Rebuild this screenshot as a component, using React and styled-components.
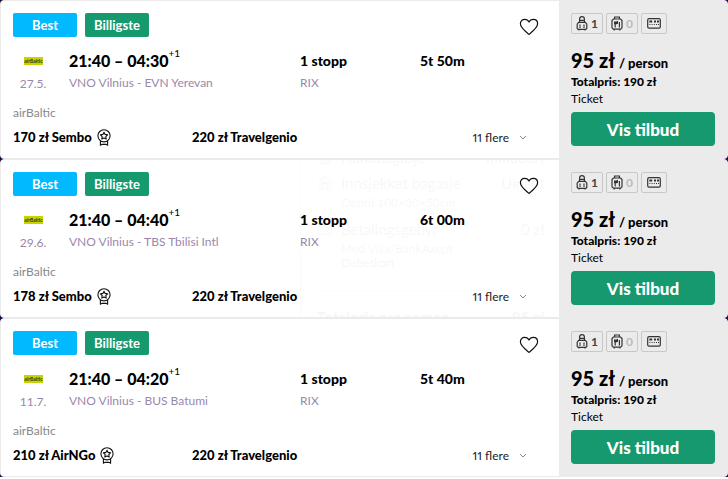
import React from 'react'
import styled, { createGlobalStyle } from 'styled-components'

const trips = [
  {
    id: 1,
    date: '27.5.',
    time: '21:40 – 04:30',
    route: 'VNO Vilnius - EVN Yerevan',
    duration: '5t 50m',
    offer: '170 zł Sembo',
  },
  {
    id: 2,
    date: '29.6.',
    time: '21:40 – 04:40',
    route: 'VNO Vilnius - TBS Tbilisi Intl',
    duration: '6t 00m',
    offer: '178 zł Sembo',
    fees: true,
  },
  {
    id: 3,
    date: '11.7.',
    time: '21:40 – 04:20',
    route: 'VNO Vilnius - BUS Batumi',
    duration: '5t 40m',
    offer: '210 zł AirNGo',
  },
]

const HeartIcon = () => (
  <svg width='20' height='18' viewBox='0 0 20 18' fill='none' stroke='#111' strokeWidth='1.2' strokeLinejoin='round'>
    <path d='M10 16.4C7 13.8 1.4 9.8 1.4 5.8C1.4 3.2 3.2 1.4 5.6 1.4C7.6 1.4 9.2 2.4 10 4C10.8 2.4 12.4 1.4 14.4 1.4C16.8 1.4 18.6 3.2 18.6 5.8C18.6 9.8 13 13.8 10 16.4Z' />
  </svg>
)

const AwardIcon = () => (
  <svg width='14' height='17' viewBox='0 0 14 17' fill='none' stroke='#111' strokeWidth='1.1' strokeLinejoin='round'>
    <circle cx='7' cy='6.8' r='6.1' />
    <path d='M7 3.2l1.1 2.2 2.5.4-1.8 1.7.4 2.5L7 8.9l-2.2 1.1.4-2.5-1.8-1.7 2.5-.4z' />
    <path d='M3.4 12v4.3l1.4-.9h4.4l1.4.9V12' />
  </svg>
)

const ChevronIcon = () => (
  <svg width='8' height='5' viewBox='0 0 8 5' fill='none' stroke='#888' strokeWidth='1'>
    <path d='M1 1l3 3 3-3' />
  </svg>
)

const BackpackIcon = () => (
  <svg width='12' height='15' viewBox='0 0 12 15' fill='none' stroke='#333' strokeWidth='1.2'>
    <path d='M3.6 6.4V3a2.4 2.4 0 0 1 4.8 0v3.4M3.6 4.4h4.8' />
    <path d='M2.6 6.4h6.8l1.4 1.8v4.2l-1 1H2.2l-1-1V8.2z' />
    <path d='M4 8.4v2M8 8.4v2M3.4 11.4h1.2M7.4 11.4h1.2M3 13.4v1.2M9 13.4v1.2' />
  </svg>
)

const SuitcaseIcon = () => (
  <svg width='12' height='15' viewBox='0 0 12 15' fill='none' stroke='#333' strokeWidth='1.2'>
    <path d='M3.6 3V1h4.8v2M3.2 13.2v1.3M8.8 13.2v1.3' />
    <path d='M2.4 3h7.2l1.4 1.6v7.2l-1.4 1.4H2.4L1 11.8V4.6z' />
    <path d='M4.2 8v3.6M6.4 5v3M8.4 6v5.6' />
    <path d='M3 5.6h3v2.6H3z' fill='#333' stroke='none' />
  </svg>
)

const CardIcon = () => (
  <svg width='14' height='11' viewBox='0 0 14 11' fill='none' stroke='#333' strokeWidth='1.2'>
    <rect x='.7' y='.7' width='12.6' height='9.4' rx='1.4' />
    <path d='M2.4 3.4h2.8M7 3.4h2M10 3.4h2' strokeWidth='2' />
    <path d='M2.4 6.5h1M4.6 6.5h1M6.8 6.5h1M9 6.5h1M11 6.5h1' />
  </svg>
)

const AirlineLogo = () => (
  <svg width='20' height='8' viewBox='0 0 20 8' role='img' aria-label='airBaltic'>
    <rect x='1' width='19' height='8' fill='#c8d400' />
    <text x='10.5' y='6' textAnchor='middle' fontSize='5' fontWeight='700' fontFamily='Lato, sans-serif' fill='#2b3a1c'>
      airBaltic
    </text>
  </svg>
)

const FeesPopup = () => (
  <Popup aria-hidden='true'>
    <Fee>
      <BackpackIcon />
      <FeeName>Håndbagasje</FeeName>
      <FeeName>Inkludert</FeeName>
    </Fee>
    <Fee>
      <SuitcaseIcon />
      <FeeName>Innsjekket bagasje</FeeName>
      <FeeName>Ukjent</FeeName>
      <FeeNote>Opptil 100×80×50cm</FeeNote>
    </Fee>
    <Fee>
      <CardIcon />
      <FeeName>Betalingsgebyr</FeeName>
      <FeeName>0 zł</FeeName>
      <FeeNote>
        Med Visa/BankAxept
        <br />
        Debetkort
      </FeeNote>
    </Fee>
    <FeeTotal>
      <span>Totalpris per person</span>
      <span>95 zł</span>
    </FeeTotal>
  </Popup>
)

const Trip = ({ trip }) => (
  <Card>
    <Details>
      <TopRow>
        <Badge $color='#00b9ff'>Best</Badge>
        <Badge $color='#17996f'>Billigste</Badge>
        <SaveButton type='button' aria-label='Lagre'>
          <HeartIcon />
        </SaveButton>
      </TopRow>
      <Flight>
        <Carrier>
          <AirlineLogo />
          <Muted>{trip.date}</Muted>
        </Carrier>
        <Leg>
          <Strong $big>
            {trip.time}
            <NextDay>+1</NextDay>
          </Strong>
          <Muted>{trip.route}</Muted>
        </Leg>
        <Leg>
          <Strong>1 stopp</Strong>
          <Muted>RIX</Muted>
        </Leg>
        <Leg>
          <Strong>{trip.duration}</Strong>
        </Leg>
      </Flight>
      <Airline>airBaltic</Airline>
      <Offers>
        <Offer>
          {trip.offer}
          <AwardIcon />
        </Offer>
        <Offer>220 zł Travelgenio</Offer>
        <MoreButton type='button'>
          11 flere
          <ChevronIcon />
        </MoreButton>
      </Offers>
    </Details>
    <Booking>
      <Extras>
        <Extra>
          <BackpackIcon />1
        </Extra>
        <Extra $none>
          <SuitcaseIcon />0
        </Extra>
        <Extra>
          <CardIcon />
        </Extra>
      </Extras>
      <Price>
        95 zł <small>/ person</small>
      </Price>
      <Total>Totalpris: 190 zł</Total>
      <Ticket>Ticket</Ticket>
      <DealButton type='button'>Vis tilbud</DealButton>
    </Booking>
    {trip.fees && <FeesPopup />}
  </Card>
)

const App = () => (
  <>
    <GlobalStyle />
    <Results>
      {trips.map((trip) => (
        <Trip key={trip.id} trip={trip} />
      ))}
    </Results>
  </>
)

export default App

const GlobalStyle = createGlobalStyle`
* {
  box-sizing: border-box;
}
body {
  margin: 0;
  background: #fff;
  color: #000;
  font-family: Lato, 'Noto Sans', sans-serif;
  font-size: 12px;
  line-height: 16px;
}
button {
  font-family: inherit;
  border: 0;
  padding: 0;
  cursor: pointer;
}
svg {
  flex: none;
  display: block;
}
`

const Results = styled.main`
  background: #200a3c;
`

const Card = styled.article`
  position: relative;
  display: grid;
  grid-template-columns: minmax(0, 1fr) 168px;
  background: #ebebeb;
  border: 1px solid #ebebeb;
  border-radius: 4px;
  overflow: hidden;
`

const Details = styled.div`
  display: flex;
  flex-direction: column;
  padding: 12px 12px 13px;
  background: #fff;
`

const TopRow = styled.div`
  display: flex;
  gap: 8px;
  margin-bottom: 16px;
`

const Badge = styled.span`
  width: 64px;
  height: 24px;
  border-radius: 2px;
  background: ${({ $color }) => $color};
  color: #fff;
  font-size: 13px;
  font-weight: 700;
  line-height: 25px;
  text-align: center;
`

const SaveButton = styled.button`
  display: flex;
  align-items: center;
  margin-left: auto;
  margin-right: 8px;
  padding-top: 4px;
  background: none;
`

const Flight = styled.div`
  display: grid;
  grid-template-columns: 40px 215px 104px 1fr;
  column-gap: 16px;
`

const Carrier = styled.div`
  display: flex;
  flex-direction: column;
  align-items: center;
  gap: 11px;
  padding-top: 4px;
`

const Leg = styled.div`
  display: flex;
  flex-direction: column;
  gap: 6px;
`

const Strong = styled.strong`
  display: flex;
  font-size: ${({ $big }) => ($big ? '16px' : '14px')};
  font-weight: 900;
  line-height: 16px;
`

const NextDay = styled.sup`
  font-size: 10px;
  font-weight: 400;
  line-height: 10px;
  margin-top: -5px;
`

const Muted = styled.span`
  color: #9b87ab;
`

const Airline = styled.div`
  margin: 13px 0 8px;
  color: #888;
`

const Offers = styled.div`
  display: grid;
  grid-template-columns: 179px 1fr auto;
  margin-right: 20px;
`

const Offer = styled.div`
  display: flex;
  align-items: center;
  gap: 5px;
  height: 16px;
  font-size: 13px;
  font-weight: 900;
`

const MoreButton = styled.button`
  display: flex;
  align-items: center;
  gap: 10px;
  background: none;
  color: #222;
  font-size: 12px;
  font-variant-numeric: proportional-nums;
`

const Booking = styled.div`
  padding: 12px;
`

const Extras = styled.div`
  display: flex;
  gap: 3px;
  margin-bottom: 16px;
`

const Extra = styled.span`
  display: flex;
  align-items: center;
  justify-content: center;
  gap: 3px;
  height: 21px;
  min-width: 26px;
  padding: 0 4px;
  border: 1px solid #c8c8c8;
  border-radius: 2px;
  color: ${({ $none }) => ($none ? '#bbb' : '#444')};
  font-weight: 700;
`

const Price = styled.div`
  font-size: 20px;
  font-weight: 900;
  line-height: 20px;

  small {
    font-size: 13px;
  }
`

const Total = styled.div`
  font-weight: 900;
  line-height: 17px;
`

const Ticket = styled.div`
  line-height: 17px;
  margin-bottom: 5px;
`

const DealButton = styled.button`
  width: 100%;
  height: 34px;
  border-radius: 4px;
  background: #17996f;
  color: #fff;
  font-size: 17px;
  font-weight: 900;
`

/* fee breakdown on its way out, almost transparent */
const Popup = styled.div`
  position: absolute;
  top: -16px;
  left: 299px;
  right: 168px;
  padding: 0 14px 0 16px;
  border-left: 1px solid #777;
  opacity: 0.03;
  pointer-events: none;
`

const Fee = styled.div`
  display: grid;
  grid-template-columns: 16px 1fr auto;
  column-gap: 8px;

  svg {
    align-self: center;
    justify-self: center;
  }
`

const FeeName = styled.span`
  font-size: 15px;
  line-height: 26px;
`

const FeeNote = styled.span`
  grid-column: 2;
  padding-bottom: 6px;
  font-size: 12px;
  line-height: 14px;
`

const FeeTotal = styled.div`
  display: flex;
  justify-content: space-between;
  margin-top: 14px;
  padding-top: 16px;
  border-top: 1px solid #bbb;
  font-size: 15px;
  font-weight: 900;
  line-height: 20px;
`
